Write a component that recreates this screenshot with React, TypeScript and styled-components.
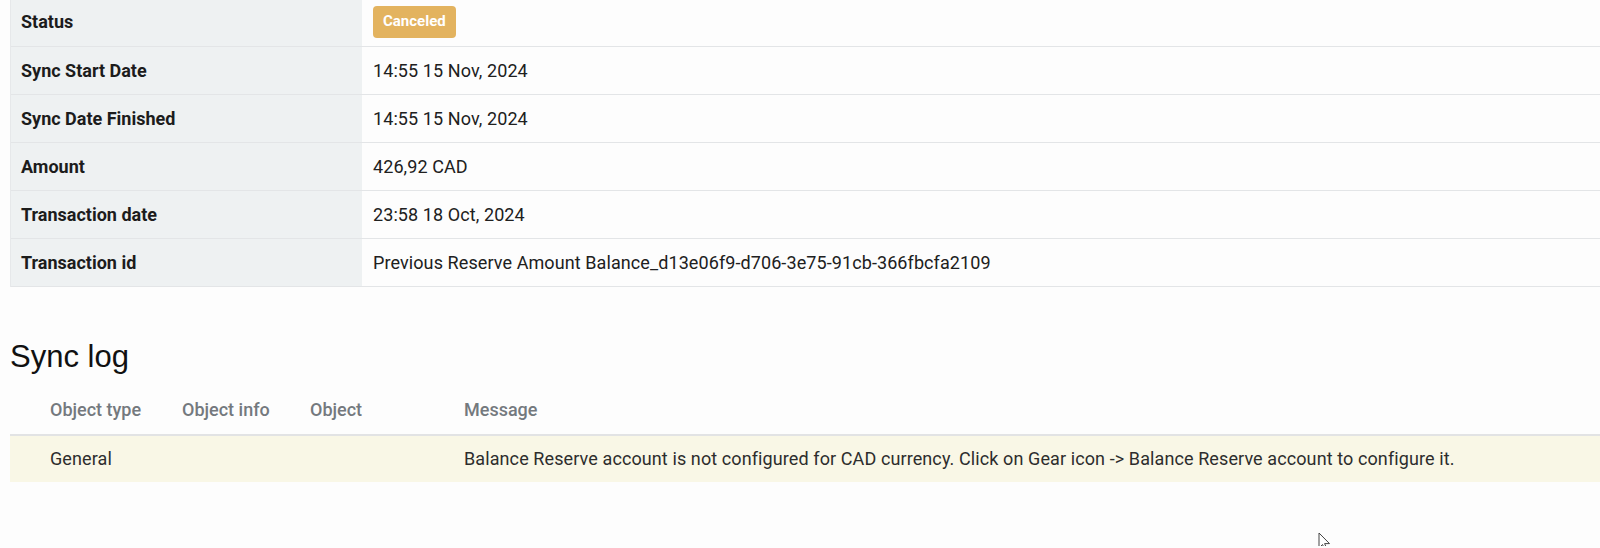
import React from "react";
import styled, { createGlobalStyle } from "styled-components";

const GlobalStyle = createGlobalStyle`
  html, body {
    margin: 0;
    padding: 0;
    background: #fdfdfd;
    overflow: hidden;
  }
  body {
    font-family: Roboto, "Liberation Sans", Arial, sans-serif;
    color: #222;
  }
`;

const Page = styled.main`
  position: relative;
  width: 1600px;
  height: 548px;
  padding-left: 10px;
  margin-top: -2px;
  box-sizing: border-box;
`;

// tabela de detalhes
const DetailsTable = styled.table`
  width: 1610px;
  border-collapse: collapse;
  font-size: 18px;
`;

const DetailsRow = styled.tr`
  height: 48px;
  border-bottom: 1px solid #e3e5e7;
`;

const LabelCell = styled.th`
  width: 331px;
  padding: 0 10px;
  background: #eef1f2;
  text-align: left;
  font-weight: 700;
  color: #1c1c1c;
  border-left: 1px solid #e6e8ea;
`;

const ValueCell = styled.td`
  padding: 0 11px;
  background: #fdfdfd;
  color: #202020;
  letter-spacing: 0.09px;
`;

const Badge = styled.span<{ $color: string }>`
  display: inline-block;
  padding: 7px 10px 8px;
  border-radius: 4px;
  background: ${(p) => p.$color};
  color: #fff;
  font-size: 15px;
  font-weight: 700;
  line-height: 17px;
  letter-spacing: 0;
`;

const Heading = styled.h2`
  margin: 52px 0 11px;
  font-family: "Liberation Sans", Arial, sans-serif;
  font-size: 31px;
  font-weight: 400;
  line-height: 36px;
  color: #111;
`;

// tabela de log
const LogTable = styled.table`
  width: 1610px;
  border-collapse: collapse;
  font-size: 18px;
  table-layout: fixed;
`;

const LogHead = styled.th<{ $w?: number }>`
  width: ${(p) => (p.$w ? `${p.$w}px` : "auto")};
  height: 48px;
  padding: 0 12px;
  text-align: left;
  font-weight: 500;
  color: #74797e;
  border-bottom: 2px solid #e2e3e4;
`;

const SpacerHead = styled.th`
  width: 28px;
  padding: 0;
  border-bottom: 2px solid #e2e3e4;
`;

const LogRow = styled.tr<{ $bg: string }>`
  height: 47px;
  background: ${(p) => p.$bg};
`;

const LogCell = styled.td`
  padding: 0 12px;
  color: #2d2d2d;
  white-space: nowrap;
  letter-spacing: 0.1px;
`;

const SpacerCell = styled.td`
  padding: 0;
`;

const Cursor = styled.svg`
  position: absolute;
  left: 1318px;
  top: 534px;
`;

const details = [
  { label: "Sync Start Date", value: "14:55 15 Nov, 2024" },
  { label: "Sync Date Finished", value: "14:55 15 Nov, 2024" },
  { label: "Amount", value: "426,92 CAD" },
  { label: "Transaction date", value: "23:58 18 Oct, 2024" },
  {
    label: "Transaction id",
    value: "Previous Reserve Amount Balance_d13e06f9-d706-3e75-91cb-366fbcfa2109",
  },
];

const App: React.FC = () => {
  return (
    <React.Fragment>
      <GlobalStyle />
      <Page>
        <DetailsTable>
          <tbody>
            <DetailsRow>
              <LabelCell>Status</LabelCell>
              <ValueCell>
                <Badge $color="#e3b35f">Canceled</Badge>
              </ValueCell>
            </DetailsRow>
            {details.map((d) => (
              <DetailsRow key={d.label}>
                <LabelCell>{d.label}</LabelCell>
                <ValueCell>{d.value}</ValueCell>
              </DetailsRow>
            ))}
          </tbody>
        </DetailsTable>

        <Heading>Sync log</Heading>

        <LogTable>
          <thead>
            <tr>
              <SpacerHead />
              <LogHead $w={108}>Object type</LogHead>
              <LogHead $w={104}>Object info</LogHead>
              <LogHead $w={130}>Object</LogHead>
              <LogHead>Message</LogHead>
            </tr>
          </thead>
          <tbody>
            <LogRow $bg="#f9f7e6">
              <SpacerCell />
              <LogCell>General</LogCell>
              <LogCell />
              <LogCell />
              <LogCell>
                Balance Reserve account is not configured for CAD currency. Click on Gear icon -&gt; Balance
                Reserve account to configure it.
              </LogCell>
            </LogRow>
          </tbody>
        </LogTable>

        <Cursor width="14" height="20" viewBox="0 0 14 20">
          <path d="M1 1 L1 16 L4.5 12.5 L7 18 L9 17 L6.6 11.6 L11.5 11.6 Z" fill="#fff" stroke="#444" strokeWidth="1" />
        </Cursor>
      </Page>
    </React.Fragment>
  );
};

export default App;
